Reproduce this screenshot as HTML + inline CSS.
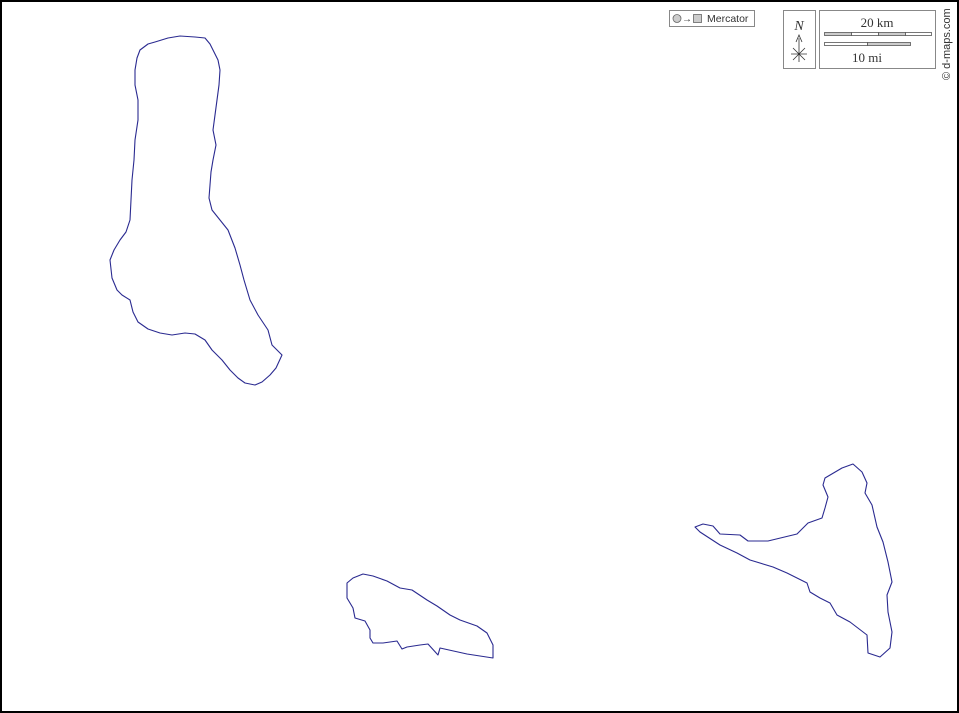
<!DOCTYPE html>
<html><head><meta charset="utf-8"><style>
html,body{margin:0;padding:0;background:#fff}
#c{position:relative;width:959px;height:713px;box-sizing:border-box;border:2px solid #000;overflow:hidden;font-family:"Liberation Sans",sans-serif}
</style></head><body><div id="c">
<svg width="959" height="713" style="position:absolute;left:-2px;top:-2px" xmlns="http://www.w3.org/2000/svg">
<g fill="none" stroke="#2a2a90" stroke-width="1.1" stroke-linejoin="round">
<polygon points="140,50 148,44 155,42 168,38 180,36 195,37 205,38 210,44 212,48 218,60 220,70 219,85 217,100 215,115 213,130 216,145 213,160 211,172 210,185 209,198 212,210 220,220 228,230 235,248 240,265 244,280 250,300 258,315 268,330 272,345 282,355 276,368 270,375 262,382 255,385 245,383 238,378 230,370 222,360 212,350 205,340 195,334 185,333 172,335 160,333 148,329 138,322 133,312 130,300 122,295 117,290 112,278 110,260 114,250 120,240 126,232 130,220 131,200 132,180 134,160 135,140 138,120 138,100 135,85 135,70 137,58"/>
<polygon points="347,583 353,578 363,574 373,576 387,581 400,588 412,590 427,600 437,606 450,615 460,620 477,626 487,633 493,645 493,658 480,656 467,654 440,648 438,655 428,644 420,645 407,647 402,649 397,641 383,643 373,643 370,638 370,630 365,621 355,618 353,608 347,598"/>
<polygon points="695,527 703,524 713,526 720,534 740,535 748,541 768,541 797,534 808,523 822,518 825,508 828,497 823,485 825,478 842,468 853,464 862,472 867,483 865,493 872,505 877,527 883,542 888,562 892,582 887,595 888,612 892,632 890,648 880,657 868,653 867,635 850,622 837,615 830,603 820,598 810,592 807,583 787,573 773,567 750,560 737,553 720,545 700,532"/>
</g>
<!-- legend -->
<rect x="669.5" y="10.5" width="85" height="16" fill="#fff" stroke="#888"/>
<circle cx="677" cy="18.5" r="4" fill="#ccc" stroke="#666" stroke-width="0.8"/>
<text x="682" y="22" font-size="10" fill="#333" font-family="Liberation Sans,sans-serif">→</text>
<rect x="693.5" y="14.5" width="8" height="8" fill="#ccc" stroke="#666" stroke-width="0.8"/>
<text x="707" y="22" font-size="10.5" fill="#333" font-family="Liberation Sans,sans-serif">Mercator</text>
<rect x="783.5" y="10.5" width="32" height="58" fill="#fff" stroke="#888"/>
<text x="799" y="30" font-size="14" font-style="italic" text-anchor="middle" font-family="Liberation Serif,serif" fill="#333">N</text>
<g stroke="#333" stroke-width="0.8" fill="none"><path d="M799 38V62M796 42L799 35L802 42M791 54H807M793 48L805 60M805 48L793 60"/></g>
<rect x="819.5" y="10.5" width="116" height="58" fill="#fff" stroke="#888"/>
<text x="877" y="27" font-size="13" text-anchor="middle" font-family="Liberation Serif,serif" fill="#333">20 km</text>
<g stroke="#555" stroke-width="0.8">
<rect x="824.5" y="32.5" width="27" height="3" fill="#ccc"/><rect x="851.5" y="32.5" width="27" height="3" fill="#fff"/><rect x="878.5" y="32.5" width="27" height="3" fill="#ccc"/><rect x="905.5" y="32.5" width="26" height="3" fill="#fff"/>
<rect x="824.5" y="42.5" width="43" height="3" fill="#fff"/><rect x="867.5" y="42.5" width="43" height="3" fill="#ccc"/>
</g>
<text x="867" y="62" font-size="13" text-anchor="middle" font-family="Liberation Serif,serif" fill="#333">10 mi</text>
<text transform="translate(950,80) rotate(-90)" font-size="11" fill="#333" font-family="Liberation Sans,sans-serif">© d-maps.com</text>
</svg>
</div></body></html>
